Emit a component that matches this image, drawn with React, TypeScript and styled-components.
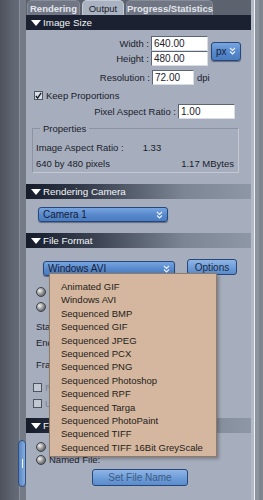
import React from 'react';
import styled, { createGlobalStyle } from 'styled-components';

const GlobalStyle = createGlobalStyle`
  html, body {
    margin: 0;
    padding: 0;
    width: 263px;
    height: 500px;
    overflow: hidden;
    background: #5b616c;
  }
  * { box-sizing: border-box; }
`;

const Root = styled.div`
  display: flex;
  width: 263px;
  height: 500px;
  font-family: "Liberation Sans", Arial, sans-serif;
  font-size: 9.5px;
  color: #1b202b;
`;

const Gutter = styled.div`
  width: 19px;
  background: linear-gradient(90deg, #4c515c 0%, #5e646f 60%, #666c77 100%);
`;

const Frame = styled.div`
  width: 7px;
  border-left: 1px solid #8c929c;
  background: #757b86;
  display: flex;
  flex-direction: column;
  padding-top: 440px;
`;

const Handle = styled.div`
  width: 8px;
  height: 47px;
  margin-left: -2px;
  border-radius: 4px;
  background: linear-gradient(90deg, #5a86c0, #86aee0);
  border: 1px solid #2f4f80;
  display: flex;
  align-items: center;
  justify-content: center;
  &::after {
    content: '';
    width: 1px;
    height: 9px;
    background: #f2f6ff;
  }
`;

const Main = styled.div`
  width: 225px;
  display: flex;
  flex-direction: column;
`;

const RightEdge = styled.div`
  flex: 1;
  display: flex;
  background: #7f858f;
  border-left: 3px solid #b3bac6;
  &::before {
    content: '';
    width: 1px;
    background: #eef1f6;
  }
  &::after {
    content: '';
    width: 4px;
    background: #8e949e;
  }
`;

const TabBar = styled.div`
  height: 15px;
  display: flex;
  align-items: flex-end;
  gap: 2px;
  padding-left: 1px;
  background: #5d636e;
`;

const Tab = styled.div<{ $active?: boolean; $w: number }>`
  width: ${p => p.$w}px;
  height: 15px;
  text-align: center;
  border-radius: 5px 5px 0 0;
  background: ${p => (p.$active ? '#a9b2c1' : '#707684')};
  color: ${p => (p.$active ? '#1d222c' : '#e3e6ec')};
  font-size: 9.5px;
  font-weight: ${p => (p.$active ? 'normal' : 'bold')};
  line-height: 15px;
  border: 1px solid ${p => (p.$active ? '#c4cbd6' : '#868c98')};
  border-bottom: none;
  white-space: nowrap;
`;

const Panel = styled.div`
  flex: 1;
  background: #a6aebd;
  display: flex;
  flex-direction: column;
  position: relative;
`;

const Header = styled.div<{ $dark?: boolean }>`
  height: 15px;
  display: flex;
  align-items: center;
  gap: 2px;
  padding-left: 5px;
  color: #f3f5f9;
  font-size: 9.8px;
  background: ${p =>
    p.$dark
      ? '#1b2130'
      : 'linear-gradient(90deg, #151b29 0%, #3a4252 30%, #7c8594 70%, #8e97a5 100%)'};
`;

const Triangle = styled.span`
  width: 0;
  height: 0;
  border-left: 5px solid transparent;
  border-right: 5px solid transparent;
  border-top: 6px solid #ffffff;
`;

const Body = styled.div<{ $h: number }>`
  height: ${p => p.$h}px;
  display: flex;
  flex-direction: column;
  position: relative;
`;

const Row = styled.div<{ $top?: number; $left?: number }>`
  display: flex;
  align-items: center;
  margin-top: ${p => p.$top || 0}px;
  padding-left: ${p => p.$left || 0}px;
`;

const Label = styled.div<{ $w: number }>`
  width: ${p => p.$w}px;
  text-align: right;
  padding-right: 2px;
  white-space: nowrap;
`;

const Input = styled.div<{ $w: number }>`
  width: ${p => p.$w}px;
  height: 15px;
  background: #ffffff;
  border: 1px solid #5d6472;
  border-right-color: #d8dce4;
  border-bottom-color: #d8dce4;
  padding-left: 2px;
  line-height: 13px;
  font-size: 10px;
`;

const SizeGrid = styled.div`
  display: flex;
  align-items: center;
  margin-top: 6px;
`;

const Stack = styled.div`
  display: flex;
  flex-direction: column;
`;

const BlueSelect = styled.div<{ $w: number; $h?: number }>`
  width: ${p => p.$w}px;
  height: ${p => p.$h || 15}px;
  border-radius: 3px;
  border: 1px solid #27467a;
  background: linear-gradient(180deg, #78a5e0 0%, #5688cb 55%, #4a7cc0 100%);
  box-shadow: 0 1px 1px rgba(30, 40, 60, 0.5);
  display: flex;
  align-items: center;
  justify-content: space-between;
  padding: 0 4px;
  color: #15203a;
  font-size: 10px;
`;

const Chevrons = () => (
  <svg width="7" height="8" viewBox="0 0 7 8">
    <path d="M1 1 L3.5 3.5 L6 1 M1 4.5 L3.5 7 L6 4.5" fill="none" stroke="#e8efff" strokeWidth="1.2" />
  </svg>
);

const CheckRow = styled.div<{ $top?: number; $left?: number; $faint?: boolean }>`
  display: flex;
  align-items: center;
  gap: 3px;
  margin-top: ${p => p.$top || 0}px;
  margin-left: ${p => p.$left || 8}px;
  color: ${p => (p.$faint ? '#7c8494' : 'inherit')};
`;

const Check = styled.div<{ $on?: boolean }>`
  width: 9px;
  height: 9px;
  border: 1px solid #4d5462;
  background: ${p => (p.$on ? '#d9dde5' : '#c2c8d2')};
  display: flex;
  align-items: center;
  justify-content: center;
`;

const Fieldset = styled.fieldset`
  margin: 4px 12px 0 6px;
  padding: 6px 4px 3px 3px;
  border: 1px solid #8b93a1;
  border-right-color: #c3c9d3;
  border-bottom-color: #c3c9d3;
  height: 50px;
  legend {
    padding: 0 3px;
    margin-left: 4px;
  }
`;

const PropRow = styled.div`
  display: flex;
  justify-content: space-between;
  height: 16px;
  line-height: 16px;
`;

const Radio = styled.div`
  width: 10px;
  height: 10px;
  border-radius: 50%;
  background: radial-gradient(circle at 35% 35%, #f4f4f4 0%, #9a9a9a 45%, #3b3b3b 100%);
  border: 1px solid #3e434c;
`;

const Button = styled.div<{ $w: number }>`
  width: ${p => p.$w}px;
  height: 16px;
  border-radius: 3px;
  border: 1px solid #27467a;
  background: linear-gradient(180deg, #8fb5e6 0%, #6b9bd6 60%, #5b8bcb 100%);
  display: flex;
  align-items: center;
  justify-content: center;
  color: #3c5b86;
  font-size: 10px;
`;

const Menu = styled.div`
  position: absolute;
  left: 23px;
  top: 25px;
  width: 168px;
  padding: 6px 0 2px 11px;
  background: #d4b79e;
  border: 1px solid #8f7a68;
  box-shadow: 2px 2px 3px rgba(40, 40, 50, 0.35);
  font-size: 9.5px;
  z-index: 2;
`;

const MenuItem = styled.div`
  height: 13.4px;
  line-height: 13.4px;
  white-space: nowrap;
  color: #1f1c1a;
`;

/* labels that sit under the open menu: only their first letters show */
const Clipped = styled.div<{ $top?: number }>`
  width: 24px;
  margin-top: ${p => p.$top || 0}px;
  margin-left: 10px;
  overflow: hidden;
  white-space: nowrap;
`;

const formats = [
  'Animated GIF',
  'Windows AVI',
  'Sequenced BMP',
  'Sequenced GIF',
  'Sequenced JPEG',
  'Sequenced PCX',
  'Sequenced PNG',
  'Sequenced Photoshop',
  'Sequenced RPF',
  'Sequenced Targa',
  'Sequenced PhotoPaint',
  'Sequenced TIFF',
  'Sequenced TIFF 16Bit GreyScale',
];

export default function App() {
  return (
    <Root>
      <GlobalStyle />
      <Gutter />
      <Frame>
        <Handle />
      </Frame>
      <Main>
        <TabBar>
          <Tab $w={53}>Rendering</Tab>
          <Tab $w={42} $active>Output</Tab>
          <Tab $w={87}>Progress/Statistics</Tab>
        </TabBar>
        <Panel>
          <Header $dark>
            <Triangle />
            Image Size
          </Header>
          <Body $h={154}>
            <SizeGrid>
              <Stack>
                <Row>
                  <Label $w={125}>Width :</Label>
                  <Input $w={57}>640.00</Input>
                </Row>
                <Row>
                  <Label $w={125}>Height :</Label>
                  <Input $w={57}>480.00</Input>
                </Row>
              </Stack>
              <BlueSelect $w={30} $h={19} style={{ marginLeft: 3 }}>
                px
                <Chevrons />
              </BlueSelect>
            </SizeGrid>
            <Row $top={4}>
              <Label $w={126}>Resolution :</Label>
              <Input $w={42}>72.00</Input>
              <span style={{ marginLeft: 3 }}>dpi</span>
            </Row>
            <CheckRow $top={5}>
              <Check $on>
                <svg width="8" height="8" viewBox="0 0 8 8">
                  <path d="M1 4 L3 6.5 L7 0.5" fill="none" stroke="#1b1f28" strokeWidth="1.6" />
                </svg>
              </Check>
              Keep Proportions
            </CheckRow>
            <Row $top={3}>
              <Label $w={152}>Pixel Aspect Ratio :</Label>
              <Input $w={57}>1.00</Input>
            </Row>
            <Fieldset>
              <legend>Properties</legend>
              <PropRow>
                <span>
                  Image Aspect Ratio :<span style={{ marginLeft: 19 }}>1.33</span>
                </span>
              </PropRow>
              <PropRow>
                <span>640 by 480 pixels</span>
                <span>1.17 MBytes</span>
              </PropRow>
            </Fieldset>
          </Body>
          <Header>
            <Triangle />
            Rendering Camera
          </Header>
          <Body $h={34}>
            <Row $top={8} $left={12}>
              <BlueSelect $w={130}>
                Camera 1
                <Chevrons />
              </BlueSelect>
            </Row>
          </Body>
          <Header>
            <Triangle />
            File Format
          </Header>
          <Body $h={170}>
            <Row $top={13} $left={17}>
              <BlueSelect $w={132} $h={15}>
                Windows AVI
                <Chevrons />
              </BlueSelect>
              <Button $w={50} style={{ marginLeft: 12, marginTop: -3, color: '#1b2a45' }}>
                Options
              </Button>
            </Row>
            <Menu>
              {formats.map(f => (
                <MenuItem key={f}>{f}</MenuItem>
              ))}
            </Menu>
            <Row $top={11} $left={10}>
              <Radio />
            </Row>
            <Row $top={5} $left={10}>
              <Radio />
            </Row>
            <Clipped $top={9}>Start Frame :</Clipped>
            <Clipped $top={5}>End Frame :</Clipped>
            <Clipped $top={11}>Frame Rate :</Clipped>
            <CheckRow $top={12} $left={7} $faint>
              <Check />
              <Clipped style={{ marginLeft: 0, width: 12 }}>Render</Clipped>
            </CheckRow>
            <CheckRow $top={5} $left={7} $faint>
              <Check />
              <Clipped style={{ marginLeft: 0, width: 12 }}>Use</Clipped>
            </CheckRow>
          </Body>
          <Header>
            <Triangle />
            File Name
          </Header>
          <Body $h={68}>
            <CheckRow $top={9} $left={10}>
              <Radio />
            </CheckRow>
            <CheckRow $top={2} $left={10}>
              <Radio />
              Named File:
            </CheckRow>
            <Row $top={4} $left={66}>
              <Button $w={96} style={{ height: 17 }}>Set File Name</Button>
            </Row>
          </Body>
        </Panel>
      </Main>
      <RightEdge />
    </Root>
  );
}
